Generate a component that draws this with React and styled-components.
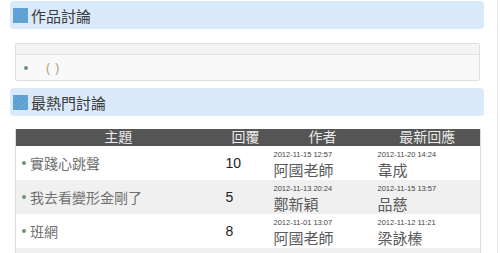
import React from 'react';
import styled, { createGlobalStyle } from 'styled-components';

const GlobalStyle = createGlobalStyle`
	html, body {
		margin: 0;
		padding: 0;
		background: #fff;
	}
	body {
		font-family: "Liberation Sans", "Noto Sans CJK TC", sans-serif;
		color: #333;
	}
`;

const topics = [
	{ title: '實踐心跳聲', replies: 10, authorDate: '2012-11-15 12:57', author: '阿國老師', lastDate: '2012-11-20 14:24', last: '韋成' },
	{ title: '我去看變形金剛了', replies: 5, authorDate: '2012-11-13 20:24', author: '鄭新穎', lastDate: '2012-11-15 13:57', last: '品慈' },
	{ title: '班網', replies: 8, authorDate: '2012-11-01 13:07', author: '阿國老師', lastDate: '2012-11-12 11:21', last: '梁詠榛' },
	{ title: '', replies: '', authorDate: '2012-11-01 13:07', author: '', lastDate: '2012-11-12 11:21', last: '' },
];

const Page = styled.div`
	width: 498px;
	height: 253px;
	overflow: hidden;
	border-right: 1px solid #e6e6e6;
	padding: 1px 13px 0 10px;
	box-sizing: border-box;
`;

const TitleBar = styled.h2`
	display: flex;
	align-items: center;
	gap: 3px;
	height: 28px;
	margin: 0 0 ${(p) => p.$gap}px;
	padding: 1px 0 0 3px;
	box-sizing: border-box;
	background: #dbeafa;
	border-radius: 4px;
	font-size: 15px;
	font-weight: normal;
	color: #3a3a3a;
`;

const TitleIcon = styled.span`
	width: 15px;
	height: 15px;
	background: repeating-linear-gradient(135deg, #5c9fd0 0 2px, #6aaad8 2px 3px);
`;

const Box = styled.div`
	margin: 0 4px 7px 5px;
	border: 1px solid #dedede;
	border-radius: 2px;
	background: #f9f9f9;
`;

const BoxHead = styled.div`
	height: 10px;
	background: #f4f4f4;
	border-bottom: 1px solid #e2e2e2;
`;

const BoxList = styled.ul`
	list-style: none;
	margin: 0;
	padding: 0 0 0 8px;
`;

const BoxItem = styled.li`
	display: flex;
	align-items: center;
	height: 25px;
	font-size: 12px;
	letter-spacing: 1px;
	color: #a3a371;
`;

const Dot = styled.span`
	width: 4px;
	height: 4px;
	border-radius: 50%;
	background: #6c9274;
	margin-right: ${(p) => p.$space}px;
	flex-shrink: 0;
`;

const Table = styled.table`
	width: 466px;
	margin-left: 5px;
	border-collapse: collapse;
	table-layout: fixed;
	border-left: 1px solid #dcdcdc;
	border-right: 1px solid #dcdcdc;
`;

const Head = styled.th`
	height: 17px;
	padding: 0;
	background: #555;
	color: #eaeaea;
	font-size: 14px;
	font-weight: normal;
	line-height: 17px;
	text-align: center;
`;

const Row = styled.tr`
	background: ${(p) => (p.$alt ? '#f0f0f0' : '#fff')};
`;

const Cell = styled.td`
	height: 34px;
	padding: 0 0 0 ${(p) => p.$pad || 0}px;
	vertical-align: middle;
	color: #222;
	font-size: 14px;
`;

const StackCell = styled.td`
	height: 34px;
	padding: 3px 0 0 3px;
	box-sizing: border-box;
	vertical-align: top;
`;

const Subject = styled.div`
	display: flex;
	align-items: center;
	padding-left: 6px;
	font-size: 14px;
	color: #707070;
`;

const Stamp = styled.div`
	font-size: 7.5px;
	line-height: 12px;
	color: #444;
	white-space: nowrap;
`;

const Name = styled.div`
	font-size: 15px;
	line-height: 19px;
	color: #5a5a5a;
`;

export default function App() {
	return (
		<>
			<GlobalStyle />
			<Page>
				<TitleBar $gap={14}>
					<TitleIcon />
					作品討論
				</TitleBar>
				<Box>
					<BoxHead />
					<BoxList>
						<BoxItem>
							<Dot $space={18} />( )
						</BoxItem>
					</BoxList>
				</Box>
				<TitleBar $gap={13}>
					<TitleIcon />
					最熱門討論
				</TitleBar>
				<Table>
					<colgroup>
						<col style={{ width: 205 }} />
						<col style={{ width: 50 }} />
						<col style={{ width: 104 }} />
						<col />
					</colgroup>
					<thead>
						<tr>
							<Head>主題</Head>
							<Head>回覆</Head>
							<Head>作者</Head>
							<Head>最新回應</Head>
						</tr>
					</thead>
					<tbody>
						{topics.map((t, i) => (
							<Row key={i} $alt={i % 2 === 1}>
								<Cell>
									{t.title && (
										<Subject>
											<Dot $space={4} />
											{t.title}
										</Subject>
									)}
								</Cell>
								<Cell $pad={5}>{t.replies}</Cell>
								<StackCell>
									<Stamp>{t.authorDate}</Stamp>
									<Name>{t.author}</Name>
								</StackCell>
								<StackCell>
									<Stamp>{t.lastDate}</Stamp>
									<Name>{t.last}</Name>
								</StackCell>
							</Row>
						))}
					</tbody>
				</Table>
			</Page>
		</>
	);
}
